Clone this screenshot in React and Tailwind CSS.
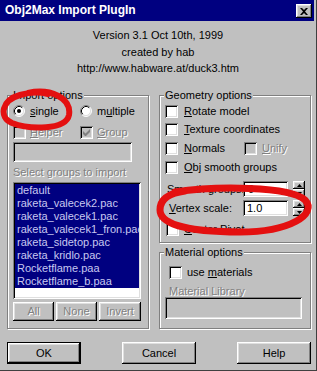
import React from "react";

const raised =
  "shadow-[inset_-1px_-1px_#000,inset_1px_1px_#fff,inset_-2px_-2px_#808080,inset_2px_2px_#dfdfdf]";
const sunken =
  "shadow-[inset_1px_1px_#808080,inset_-1px_-1px_#fff,inset_2px_2px_#000,inset_-2px_-2px_#dfdfdf]";
const greyText = "text-[#808080] [text-shadow:1px_1px_0_#fff]";

function CheckBox({ checked, disabled }) {
  return (
    <span
      className={`flex-none w-[13px] h-[13px] flex items-center justify-center ${
        disabled ? "bg-[#c0c0c0]" : "bg-white"
      } ${sunken}`}
    >
      {checked && (
        <svg width="7" height="7" viewBox="0 0 7 7">
          <path
            d="M0 2v3l2 2h1l4-4V0L2.5 4.5z"
            fill={disabled ? "#808080" : "#000"}
          />
        </svg>
      )}
    </span>
  );
}

function Radio({ checked }) {
  return (
    <svg width="12" height="12" viewBox="0 0 12 12" className="flex-none">
      <circle cx="6" cy="6" r="5" fill="#fff" />
      <path d="M2.11 9.89 A5.5 5.5 0 0 1 9.89 2.11" stroke="#808080" fill="none" />
      <path d="M9.89 2.11 A5.5 5.5 0 0 1 2.11 9.89" stroke="#fff" fill="none" />
      <path d="M2.82 9.18 A4.5 4.5 0 0 1 9.18 2.82" stroke="#000" fill="none" />
      <path d="M9.18 2.82 A4.5 4.5 0 0 1 2.82 9.18" stroke="#dfdfdf" fill="none" />
      {checked && <circle cx="6" cy="6" r="2" fill="#000" />}
    </svg>
  );
}

function Button({ children, className = "", disabled, isDefault }) {
  const inner = (
    <div
      className={`w-full h-full flex items-center justify-center bg-[#c0c0c0] ${raised} ${
        disabled ? greyText : ""
      }`}
    >
      {children}
    </div>
  );
  if (isDefault) {
    return <div className={`border border-black ${className}`}>{inner}</div>;
  }
  return <div className={className}>{inner}</div>;
}

function Spinner() {
  return (
    <div className="flex-none flex flex-col w-[12px] h-[16px] ml-[5px]">
      <div className={`h-[8px] bg-[#c0c0c0] flex items-center justify-center ${raised}`}>
        <svg width="5" height="3" viewBox="0 0 5 3">
          <path d="M2.5 0L5 3H0z" fill="#000" />
        </svg>
      </div>
      <div className={`h-[8px] bg-[#c0c0c0] flex items-center justify-center ${raised}`}>
        <svg width="5" height="3" viewBox="0 0 5 3">
          <path d="M0 0h5L2.5 3z" fill="#000" />
        </svg>
      </div>
    </div>
  );
}

function GroupBox({ title, className = "", children }) {
  return (
    <div
      className={`relative border border-[#808080] shadow-[inset_1px_1px_0_#fff,1px_1px_0_#fff] ${className}`}
    >
      <span className="absolute -top-[7px] left-[4px] px-[1px] bg-[#c0c0c0] leading-[13px]">
        {title}
      </span>
      {children}
    </div>
  );
}

const groups = [
  "default",
  "raketa_valecek2.pac",
  "raketa_valecek1.pac",
  "raketa_valecek1_fron.pac",
  "raketa_sidetop.pac",
  "raketa_kridlo.pac",
  "Rocketflame.paa",
  "Rocketflame_b.paa",
];

export default function App() {
  return (
    <div className="relative w-[317px] h-[371px] bg-[#c0c0c0] border-r border-b border-[#404040] flex flex-col overflow-hidden font-['Liberation_Sans',Arial,sans-serif] text-[11px] leading-[13px] text-black">
      {/* title bar */}
      <div className="h-[21px] mr-[2px] bg-[#000080] flex items-center justify-between pl-[5px] pr-[2px]">
        <span className="text-white font-bold text-[12px]">Obj2Max Import PlugIn</span>
        <div className={`w-[16px] h-[14px] mt-[1px] bg-[#c0c0c0] flex items-center justify-center ${raised}`}>
          <svg width="8" height="7" viewBox="0 0 8 7">
            <path d="M0 0h2l2 2 2-2h2L5 3.5 8 7H6L4 5 2 7H0l3-3.5z" fill="#000" />
          </svg>
        </div>
      </div>

      {/* header */}
      <div className="mt-[6px] text-center leading-[16.5px]">
        <div>Version 3.1 Oct 10th, 1999</div>
        <div>created by hab</div>
        <div>http://www.habware.at/duck3.htm</div>
      </div>

      {/* groups */}
      <div className="mt-[18.5px] flex pl-[7px] gap-[10px]">
        <GroupBox title="Import options" className="w-[142px] h-[234px]">
          <div className="flex flex-col pl-[5px]">
            <div className="mt-[8px] h-[14px] flex items-center">
              <div className="w-[67px] flex items-center gap-[5px]">
                <Radio checked />
                <span>
                  <u>s</u>ingle
                </span>
              </div>
              <div className="flex items-center gap-[5px]">
                <Radio />
                <span>
                  m<u>u</u>ltiple
                </span>
              </div>
            </div>
            <div className="mt-[8px] h-[13px] flex items-center">
              <div className="w-[67px] flex items-center gap-[4px]">
                <CheckBox disabled />
                <span className={greyText}>
                  <u>H</u>elper
                </span>
              </div>
              <div className="flex items-center gap-[4px]">
                <CheckBox checked disabled />
                <span className={greyText}>
                  <u>G</u>roup
                </span>
              </div>
            </div>
            <div className={`mt-[3px] h-[20px] w-[119px] bg-[#c0c0c0] ${sunken}`} />
            <div className={`mt-[4px] h-[13px] ${greyText}`}>Select groups to import</div>
            <div className={`mt-[3px] h-[117px] w-[128px] bg-white p-[2px] overflow-hidden ${sunken}`}>
              {groups.map((g) => (
                <div
                  key={g}
                  className="h-[13px] bg-[#000080] text-[#c8c8f0] pl-[2px] whitespace-nowrap overflow-hidden"
                >
                  {g}
                </div>
              ))}
            </div>
            <div className="mt-[3px] flex gap-[2px]">
              <Button disabled className="w-[41px] h-[19px]">All</Button>
              <Button disabled className="w-[41px] h-[19px]">None</Button>
              <Button disabled className="w-[42px] h-[19px]">Invert</Button>
            </div>
          </div>
        </GroupBox>

        <div className="w-[152px] flex flex-col">
          <GroupBox title="Geometry options" className="h-[148px]">
            <div className="flex flex-col pl-[5px]">
              <div className="mt-[9px] h-[13px] flex items-center gap-[6px]">
                <CheckBox />
                <span>
                  <u>R</u>otate model
                </span>
              </div>
              <div className="mt-[5px] h-[13px] flex items-center gap-[6px]">
                <CheckBox />
                <span>
                  <u>T</u>exture coordinates
                </span>
              </div>
              <div className="mt-[6px] h-[13px] flex items-center">
                <div className="w-[79px] flex items-center gap-[6px]">
                  <CheckBox />
                  <span>
                    <u>N</u>ormals
                  </span>
                </div>
                <div className="flex items-center gap-[5px]">
                  <CheckBox disabled />
                  <span className={greyText}>
                    <u>U</u>nify
                  </span>
                </div>
              </div>
              <div className="mt-[6px] h-[13px] flex items-center gap-[6px]">
                <CheckBox />
                <span>
                  <u>O</u>bj smooth groups
                </span>
              </div>
              <div className="mt-[7px] h-[16px] flex items-center">
                <span className="ml-[2px] w-[76px] flex-none whitespace-nowrap">Smooth groups:</span>
                <div className={`flex-none w-[45px] h-[16px] bg-white pl-[5px] flex items-center ${sunken}`}>0</div>
                <Spinner />
              </div>
              <div className="mt-[3px] h-[16px] flex items-center">
                <span className="ml-[4px] w-[74px] flex-none whitespace-nowrap">
                  <u>V</u>ertex scale:
                </span>
                <div className={`flex-none w-[45px] h-[16px] bg-white pl-[4px] flex items-center ${sunken}`}>1.0</div>
                <Spinner />
              </div>
              <div className="mt-[7px] h-[13px] flex items-center gap-[5px] ml-[1px]">
                <CheckBox />
                <span>
                  <u>C</u>enter Pivot
                </span>
              </div>
            </div>
          </GroupBox>

          <GroupBox title="Material options" className="mt-[9px] h-[77px]">
            <div className="flex flex-col pl-[5px]">
              <div className="mt-[13px] ml-[4px] h-[13px] flex items-center gap-[5px]">
                <CheckBox />
                <span>
                  use <u>m</u>aterials
                </span>
              </div>
              <div className={`mt-[6px] ml-[4px] h-[12px] leading-[12px] ${greyText}`}>Material Library</div>
              <div className={`h-[22px] w-[137px] bg-[#c0c0c0] ${sunken}`} />
            </div>
          </GroupBox>
        </div>
      </div>

      {/* dialog buttons */}
      <div className="mt-[13px] ml-[7px] w-[304px] flex justify-between">
        <Button isDefault className="w-[74px] h-[22px]">OK</Button>
        <Button className="w-[74px] h-[22px]">Cancel</Button>
        <Button className="w-[74px] h-[22px]">Help</Button>
      </div>

      {/* red hand-drawn annotations */}
      <svg
        className="absolute inset-0 pointer-events-none"
        width="317"
        height="371"
        viewBox="0 0 317 371"
      >
        <path
          d="M28 93 C50 88, 72 98, 69 115 C66 130, 30 130, 12 123 C-2 117, 2 100, 20 95 C30 92, 40 92, 48 94"
          stroke="#e41010"
          strokeWidth="6"
          fill="none"
          strokeLinecap="round"
        />
        <path
          d="M175 192 C215 186, 290 186, 305 200 C318 214, 290 232, 240 232 C195 232, 160 226, 160 210 C160 198, 170 193, 185 191"
          stroke="#e41010"
          strokeWidth="7"
          fill="none"
          strokeLinecap="round"
        />
      </svg>
    </div>
  );
}
